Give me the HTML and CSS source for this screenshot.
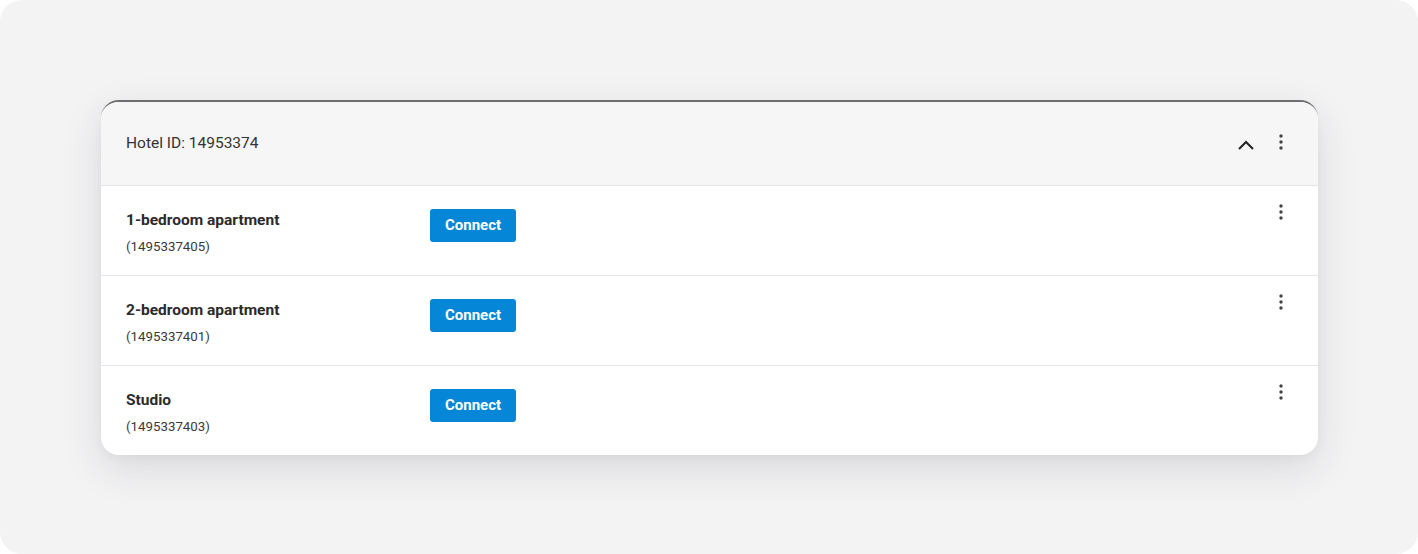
FILE: index.html
```html
<!DOCTYPE html>
<html>
<head>
<meta charset="utf-8">
<link rel="stylesheet" href="styles.css">
</head>
<body>
<div class="stage">
  <div class="card">
    <div class="card-head">
      <span class="hotel-id">Hotel ID: 14953374</span>
      <div class="head-actions">
        <svg class="chev" width="18" height="12" viewBox="0 0 18 12"><path d="M2 10 L9 3 L16 10" fill="none" stroke="#222" stroke-width="2"/></svg>
        <svg class="kebab head-kebab" width="6" height="18" viewBox="0 0 6 18"><circle cx="3" cy="3" r="1.7" fill="#444"/><circle cx="3" cy="9" r="1.7" fill="#444"/><circle cx="3" cy="15" r="1.7" fill="#444"/></svg>
      </div>
    </div>
    <div class="row">
      <div class="room">
        <div class="room-name">1-bedroom apartment</div>
        <div class="room-id">(1495337405)</div>
      </div>
      <button class="connect">Connect</button>
      <svg class="kebab row-kebab" width="6" height="18" viewBox="0 0 6 18"><circle cx="3" cy="3" r="1.7" fill="#444"/><circle cx="3" cy="9" r="1.7" fill="#444"/><circle cx="3" cy="15" r="1.7" fill="#444"/></svg>
    </div>
    <div class="row">
      <div class="room">
        <div class="room-name">2-bedroom apartment</div>
        <div class="room-id">(1495337401)</div>
      </div>
      <button class="connect">Connect</button>
      <svg class="kebab row-kebab" width="6" height="18" viewBox="0 0 6 18"><circle cx="3" cy="3" r="1.7" fill="#444"/><circle cx="3" cy="9" r="1.7" fill="#444"/><circle cx="3" cy="15" r="1.7" fill="#444"/></svg>
    </div>
    <div class="row last">
      <div class="room">
        <div class="room-name">Studio</div>
        <div class="room-id">(1495337403)</div>
      </div>
      <button class="connect">Connect</button>
      <svg class="kebab row-kebab" width="6" height="18" viewBox="0 0 6 18"><circle cx="3" cy="3" r="1.7" fill="#444"/><circle cx="3" cy="9" r="1.7" fill="#444"/><circle cx="3" cy="15" r="1.7" fill="#444"/></svg>
    </div>
  </div>
</div>
</body>
</html>
```

FILE: styles.css
```css
* { box-sizing: border-box; }
html, body { margin: 0; padding: 0; background: #ffffff; }
body { font-family: Roboto, "Liberation Sans", Arial, sans-serif; color: #2d2d2d; }
.stage {
  width: 1418px;
  height: 554px;
  background: #f3f3f4;
  border-radius: 22px;
  padding: 100px 100px 0 101px;
}
.card {
  width: 1217px;
  background: #fff;
  border-radius: 18px;
  border-top: 2px solid #6f6f6f;
  overflow: hidden;
  box-shadow: 0 14px 40px rgba(40, 40, 60, 0.12), 0 4px 10px rgba(40, 40, 60, 0.04);
}
.card-head {
  height: 84px;
  background: #f6f6f6;
  border-bottom: 1px solid #e4e4e4;
  display: flex;
  align-items: center;
  padding: 0 34px 0 25px;
}
.hotel-id { font-size: 15.5px; color: #333; flex: 1; margin-top: -1px; }
.head-actions { display: flex; align-items: center; gap: 23px; }
.chev { margin-top: 3px; }
.head-kebab { margin-top: -3px; }
.row {
  height: 90px;
  border-bottom: 1px solid #e6e6e6;
  display: flex;
  align-items: flex-start;
  padding: 21px 34px 0 25px;
}
.row.last { border-bottom: none; height: 89px; }
.room { width: 304px; }
.room-name { font-size: 15.5px; font-weight: 700; color: #2b2b2b; line-height: 20px; margin-top: 3px; }
.room-id { font-size: 13.3px; color: #3a3a3a; margin-top: 9px; line-height: 16px; }
.connect {
  width: 86px;
  height: 33px;
  margin-top: 2px;
  background: #0686d6;
  color: #fff;
  border: none;
  border-radius: 3px;
  font-family: Roboto, "Liberation Sans", Arial, sans-serif;
  font-size: 15px;
  font-weight: 700;
  padding: 0 0 1px;
}
.row-kebab { margin-left: auto; margin-top: -4px; }
```
